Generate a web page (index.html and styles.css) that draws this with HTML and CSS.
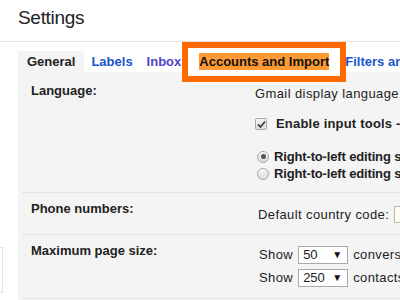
FILE: index.html
```html
<!DOCTYPE html>
<html lang="en">

<head>
  <meta charset="UTF-8" />
  <meta name="viewport" content="width=device-width, initial-scale=1.0" />
  <title>Settings</title>
  <link rel="stylesheet" href="styles.css">
</head>

<body>
  <div class="header">
    <h1 class="title">Settings</h1>
  </div>

  <div class="main">
    <div class="side">
      <div class="side-box"></div>
    </div>

    <div class="content">
      <div class="tabs">
        <div class="tab active">General</div>
        <div class="tab link">Labels</div>
        <div class="tab visited">Inbox</div>
        <div class="tab marked"><span class="hl">Accounts and Import</span></div>
        <div class="tab link">Filters and Blocked Addresses</div>
      </div>

      <div class="panel">
        <div class="row row-lang">
          <div class="label">Language:</div>
          <div class="value">
            <div class="line">Gmail display language:</div>
            <div class="line check-line">
              <span class="checkbox">
                <svg width="9" height="9" viewBox="0 0 9 9">
                  <path d="M1 4.5 L3.5 7 L8 1.5" fill="none" stroke="#444" stroke-width="1.8" />
                </svg>
              </span>
              <b>Enable input tools - Use various text input methods</b>
            </div>
            <div class="radios">
              <div class="line radio-line"><span class="radio on"></span><b>Right-to-left editing support off</b></div>
              <div class="line radio-line"><span class="radio"></span><b>Right-to-left editing support on</b></div>
            </div>
          </div>
        </div>

        <div class="row row-phone">
          <div class="label">Phone numbers:</div>
          <div class="value inline">
            <span>Default country code:</span>
            <span class="textbox"></span>
          </div>
        </div>

        <div class="row row-size">
          <div class="label">Maximum page size:</div>
          <div class="value">
            <div class="show-line">
              <span>Show</span>
              <span class="select"><span>50</span><span class="arrow">&#9660;</span></span>
              <span>conversations per page</span>
            </div>
            <div class="show-line">
              <span>Show</span>
              <span class="select"><span>250</span><span class="arrow">&#9660;</span></span>
              <span>contacts per page</span>
            </div>
          </div>
        </div>
      </div>
    </div>
  </div>
</body>

</html>
```

FILE: styles.css
```css
* {
  margin: 0;
  padding: 0;
  box-sizing: border-box;
}

body {
  font-family: "Liberation Sans", Arial, sans-serif;
  font-size: 13px;
  line-height: 16px;
  color: #222;
  background: #fff;
  width: 400px;
  height: 300px;
  overflow: hidden;
}

.header {
  height: 42px;
  padding: 6px 0 0 18px;
  border-bottom: 1px solid #e5e5e5;
}

.title {
  font-size: 19px;
  font-weight: normal;
  line-height: 24px;
  letter-spacing: -0.3px;
  color: #222;
}

.main {
  display: flex;
}

.side {
  width: 18px;
  flex-shrink: 0;
}

.side-box {
  margin: 205px 0 0 -20px;
  width: 23px;
  height: 46px;
  border: 1px solid #e3e3e3;
}

.content {
  flex: 1;
  min-width: 0;
}

.tabs {
  display: flex;
  padding-top: 9px;
  white-space: nowrap;
}

.tab {
  height: 21px;
  line-height: 21px;
  padding: 0 7px;
  font-weight: bold;
}

.tab.active {
  padding: 0 9px;
  background: #f4f4f4;
  color: #222;
}

.tab.link {
  color: #1a55cc;
}

.tab.visited {
  color: #5245c9;
}

.tab.marked {
  position: relative;
  padding: 0 9px 0 11px;
  color: #111;
}

.tab.marked::before {
  content: "";
  box-sizing: border-box;
  position: absolute;
  left: -6px;
  top: -9px;
  width: 164px;
  height: 40px;
  border: 6px solid #ff6a00;
  background: #fff;
}

.hl {
  position: relative;
  background: #ff9933;
  padding: 1px 0;
}

.panel {
  background: #f4f4f4;
  height: 240px;
  padding-left: 4px;
}

.row {
  display: grid;
  grid-template-columns: 224px 1fr;
  padding-left: 9px;
  border-bottom: 1px solid #e2e2e2;
  white-space: nowrap;
}

.label {
  font-weight: bold;
}

.value {
  min-width: 0;
  letter-spacing: 0.4px;
}

.value b {
  letter-spacing: 0.2px;
}

.value .radio-line b {
  letter-spacing: -0.15px;
}

.row-lang {
  height: 121px;
}

.row-lang .label {
  padding-top: 11px;
}

.row-lang .value {
  padding-top: 14px;
}

.check-line {
  display: flex;
  align-items: center;
  margin-top: 14px;
}

.checkbox {
  flex-shrink: 0;
  width: 12px;
  height: 12px;
  margin-right: 9px;
  border: 1px solid #a8a8a8;
  border-radius: 2px;
  background: linear-gradient(#f6f6f6, #dedede);
  display: flex;
  align-items: center;
  justify-content: center;
}

.radios {
  margin-top: 16px;
}

.radio-line {
  display: flex;
  align-items: center;
  height: 17px;
  margin-left: 2px;
}

.radio {
  flex-shrink: 0;
  width: 12px;
  height: 12px;
  margin-right: 5px;
  border: 1px solid #a8a8a8;
  border-radius: 50%;
  background: linear-gradient(#f6f6f6, #dcdcdc);
  display: flex;
  align-items: center;
  justify-content: center;
}

.radio.on::after {
  content: "";
  width: 5px;
  height: 5px;
  border-radius: 50%;
  background: #555;
}

.row-phone {
  height: 42px;
}

.row-phone .label {
  padding-top: 8px;
}

.value.inline {
  display: flex;
  align-items: center;
  gap: 5px;
  padding: 13px 0 0 3px;
  align-self: start;
}

.textbox {
  width: 40px;
  height: 17px;
  border: 1px solid #b9b9b9;
  background: #fffdf0;
  flex-shrink: 0;
}

.row-size {
  height: 64px;
}

.row-size .label {
  padding-top: 8px;
}

.row-size .value {
  padding: 11px 0 0 4px;
}

.show-line {
  display: flex;
  align-items: center;
  gap: 5px;
  height: 18px;
  margin-bottom: 5px;
}

.select {
  display: flex;
  align-items: center;
  justify-content: space-between;
  width: 50px;
  height: 18px;
  padding: 0 5px 0 4px;
  border: 1px solid #a9a9a9;
  background: #fff;
  flex-shrink: 0;
  letter-spacing: 0;
}

.arrow {
  font-size: 10px;
  color: #111;
}
```
